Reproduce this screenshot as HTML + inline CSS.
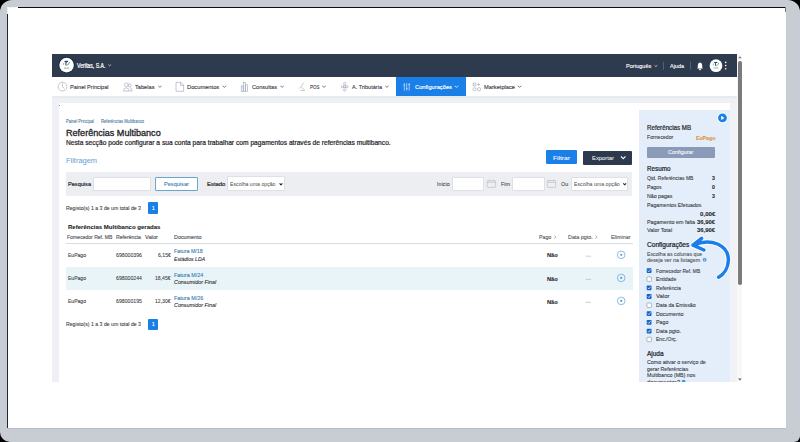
<!DOCTYPE html>
<html><head><meta charset="utf-8"><style>
html,body{margin:0;padding:0;width:800px;height:442px;overflow:hidden;background:#000;}
body{position:relative;font-family:"Liberation Sans",sans-serif;}
.a{position:absolute;box-sizing:border-box;}
.tx{position:absolute;white-space:nowrap;line-height:1;transform-origin:0 50%;}
#app{position:absolute;left:0;top:0;width:800px;height:381.5px;overflow:hidden;}
</style></head><body>
<div class="a" style="left:0;top:0;width:800px;height:442px;border-radius:12px 12px 6px 10px;background:#c8cdd4"></div>
<div class="a" style="left:7px;top:7px;width:779px;height:421px;background:#fff;border-left:1px solid #1c293b;border-top:1px solid #0d0f12"></div>
<div class="a" style="left:7px;top:7px;width:11px;height:1px;background:#f4f5f7"></div>
<div class="a" style="left:7px;top:7px;width:1px;height:7px;background:#eef0f3"></div>
<div class="a" style="left:8px;top:427.5px;width:778px;height:0.8px;background:#b4bcc8"></div>
<div class="a" style="left:785.4px;top:7px;width:0.6px;height:5px;background:#6c7686"></div>

<div id="app">
<!-- header -->
<div class="a" style="left:52px;top:54px;width:685px;height:23px;background:#2e3a4e"></div>
<!-- nav -->
<div class="a" style="left:52px;top:77px;width:685px;height:19px;background:#fff"></div>
<div class="a" style="left:396px;top:77px;width:69.5px;height:18.5px;background:#1a80e8"></div>
<!-- content bg -->
<div class="a" style="left:52px;top:95.7px;width:685px;height:290px;background:#eef0f5"></div>
<div class="a" style="left:58.6px;top:103.3px;width:671.4px;height:290px;background:#fff"></div>
<div class="a" style="left:639.3px;top:110.2px;width:90.7px;height:290px;background:#e4eefa"></div>
<div class="a" style="left:52px;top:95.7px;width:685px;height:2px;background:#e6eaf1"></div>
<div class="a" style="left:58.9px;top:105px;width:1px;height:1px;background:#8a8a8a"></div>
<div class="a" style="left:730px;top:103.3px;width:7px;height:290px;background:#f1f2f6"></div>
<!-- scrollbar -->
<div class="a" style="left:737px;top:54px;width:5px;height:330px;background:#f8f8f9"></div>
<div class="a" style="left:738.3px;top:61.4px;width:3.6px;height:224.1px;background:#7b7b7b;border-radius:1.8px"></div>
<!-- buttons -->
<div class="a" style="left:546px;top:150.2px;width:31px;height:14.1px;background:#1a80e8;border-radius:1px"></div>
<div class="a" style="left:583.2px;top:150.5px;width:48.8px;height:14px;background:#2d3a4e;border-radius:1px"></div>
<!-- filter bar -->
<div class="a" style="left:65.7px;top:171.8px;width:566px;height:24px;background:#eceef2"></div>
<div class="a" style="left:93.3px;top:177.3px;width:58.2px;height:14.2px;background:#fff;border:0.6px solid #dde0e5;border-radius:1px"></div>
<div class="a" style="left:154.9px;top:176.9px;width:42.7px;height:14.4px;background:#fff;border:0.7px solid #6aa6cc;border-radius:1px"></div>
<div class="a" style="left:226.5px;top:176.4px;width:58px;height:14.9px;background:#fff;border:0.6px solid #dde0e5;border-radius:1px"></div>
<div class="a" style="left:451.5px;top:177.3px;width:32.8px;height:14px;background:#fff;border:0.6px solid #dde0e5;border-radius:1px"></div>
<div class="a" style="left:512.3px;top:177.3px;width:32.4px;height:14px;background:#fff;border:0.6px solid #dde0e5;border-radius:1px"></div>
<div class="a" style="left:570.7px;top:176.5px;width:56.9px;height:14.9px;background:#fff;border:0.6px solid #dde0e5;border-radius:1px"></div>
<!-- pagination -->
<div class="a" style="left:147.7px;top:202.2px;width:10.2px;height:11.5px;background:#1a80e8;border-radius:1px"></div>
<div class="a" style="left:147.7px;top:318.6px;width:10.2px;height:11.2px;background:#1a80e8;border-radius:1px"></div>
<!-- table -->
<div class="a" style="left:65.6px;top:267.4px;width:567px;height:22.6px;background:#e9f4f8"></div>
<div class="a" style="left:66px;top:242.8px;width:566.5px;height:1px;background:#d9dce1"></div>
<!-- configurar -->
<div class="a" style="left:646.8px;top:146.9px;width:68.2px;height:11.1px;background:#8a9bb8;border-radius:1px"></div>
<svg class="a" style="left:0;top:0" width="800" height="442" viewBox="0 0 800 442">
<!-- header logo -->
<circle cx="66.6" cy="65.1" r="8.1" fill="#1a2335"/>
<circle cx="66.6" cy="65.1" r="7.3" fill="#ffffff"/>
<path d="M64.6 61.6 L68 61.4" stroke="#1d3f7a" stroke-width="1.1" fill="none"/>
<path d="M66.1 61.8 L65.9 65.4" stroke="#1d3a66" stroke-width="1" fill="none"/>
<path d="M63.9 62.8 L63.3 65" stroke="#7fa6d6" stroke-width="0.8" fill="none"/>
<path d="M66.7 65.3 Q68.9 65 69.6 62" stroke="#5cb85c" stroke-width="1" fill="none"/>
<rect x="64" y="67.6" width="5" height="1.1" fill="#a5adb6"/>
<!-- veritas chevron -->
<path d="M108.3 64.6 L109.7 65.9 L111.1 64.6" stroke="#d5dae2" stroke-width="0.8" fill="none"/>
<!-- portugues chevron -->
<path d="M654.5 65.3 L655.9 66.6 L657.3 65.3" stroke="#d5dae2" stroke-width="0.8" fill="none"/>
<rect x="663.3" y="61.8" width="0.7" height="8" fill="#66707f"/>
<rect x="690.1" y="61.8" width="0.7" height="8" fill="#66707f"/>
<!-- bell -->
<path d="M697 68.6 L697.8 67.6 L697.8 65.2 Q697.9 62.6 700 62.5 Q702.1 62.6 702.2 65.2 L702.2 67.6 L703 68.6 Z" fill="#fff"/>
<circle cx="700" cy="69.4" r="0.9" fill="#fff"/>
<!-- avatar -->
<circle cx="716" cy="65.65" r="6.35" fill="#fff"/>
<path d="M714.2 62.5 L717.4 62.4" stroke="#1d3f7a" stroke-width="1" fill="none"/>
<path d="M715.6 62.7 L715.5 65.8" stroke="#1d3a66" stroke-width="0.9" fill="none"/>
<path d="M713.6 63.6 L713.1 65.6" stroke="#7fa6d6" stroke-width="0.7" fill="none"/>
<path d="M716.2 65.8 Q718.2 65.5 718.8 62.8" stroke="#5cb85c" stroke-width="0.9" fill="none"/>
<rect x="713.6" y="67.5" width="4.8" height="1" fill="#a5adb6"/>
<circle cx="725.7" cy="62.4" r="0.8" fill="#fff"/>
<circle cx="725.7" cy="65.6" r="0.8" fill="#fff"/>
<circle cx="725.7" cy="68.8" r="0.8" fill="#fff"/>
<!-- nav icons -->
<g stroke="#9aa3b5" stroke-width="0.6" fill="none">
<circle cx="62.5" cy="86.6" r="4.4"/>
<path d="M62.5 83.4 L62.5 86.9 L64.6 88.4"/>
<circle cx="126.3" cy="84.8" r="1.9"/>
<circle cx="129.6" cy="85.2" r="1.5"/>
<path d="M123.4 91 Q123.6 87.8 126.3 87.8 Q129 87.8 129.2 91 Z"/>
<path d="M129.8 87.6 Q132 87.9 132 91 L129.6 91"/>
<path d="M176 82.4 L181 82.4 L183.6 85 L183.6 91.3 L176 91.3 Z"/>
<path d="M180.6 82.4 L180.6 85.4 L183.6 85.4" stroke="#7d9fd0"/>
<rect x="241.2" y="86" width="1.8" height="5.3"/>
<rect x="243.4" y="82.3" width="1.8" height="9"/>
<rect x="245.6" y="84.8" width="1.8" height="6.5"/>
<path d="M303.8 82.7 L299.6 88.6 M300.4 90.4 L305 90.4 M301.6 87.2 L304.2 89.8"/>
<circle cx="344.7" cy="83.6" r="1.15"/>
<circle cx="344.7" cy="89.9" r="1.15"/>
<circle cx="342.4" cy="86.75" r="1.15"/>
<circle cx="347" cy="86.75" r="1.15"/>
<rect x="343.7" y="85.8" width="2" height="1.9"/>
<rect x="473.1" y="83.1" width="2.8" height="2.8"/>
<path d="M478.6 82.9 L478.6 86.1 M477 84.5 L480.2 84.5"/>
<circle cx="474.6" cy="89.3" r="1.6"/>
<circle cx="479" cy="89.3" r="1.7"/>
</g>
<!-- chevrons nav -->
<g stroke="#72777f" stroke-width="0.95" fill="none" stroke-linecap="round" stroke-linejoin="round">
<path d="M158.5 86.1 L159.9 87.3 L161.3 86.1"/>
<path d="M222.9 86.1 L224.4 87.3 L225.9 86.1"/>
<path d="M280.7 86.1 L282.1 87.3 L283.5 86.1"/>
<path d="M322.5 86.1 L324 87.3 L325.5 86.1"/>
<path d="M385.5 86.1 L386.9 87.3 L388.3 86.1"/>
<path d="M518.1 86.1 L519.6 87.3 L521.1 86.1"/>
</g>
<path d="M455.1 86.1 L456.6 87.3 L458.1 86.1" stroke="#d4e6fa" stroke-width="0.9" fill="none" stroke-linecap="round"/>
<!-- config sliders -->
<g stroke="#d5e7fb" stroke-width="0.7" fill="none">
<path d="M404.3 83.1 L404.3 90.7 M406.7 83.1 L406.7 90.7 M409.2 83.1 L409.2 90.7"/>
<path d="M403.4 85.2 L405.2 85.2 M405.8 88.6 L407.6 88.6 M408.3 84.6 L410.1 84.6"/>
</g>
</svg>
<svg class="a" style="left:0;top:0" width="800" height="442" viewBox="0 0 800 442">
<!-- exportar chevron -->
<path d="M620.9 156.4 L623.2 158.7 L625.5 156.4" stroke="#fff" stroke-width="1.05" fill="none"/>
<!-- select chevrons -->
<path d="M279.6 183.3 L281 184.8 L282.4 183.3" stroke="#222" stroke-width="1.1" fill="none"/>
<path d="M623.3 183.3 L624.7 184.8 L626.1 183.3" stroke="#222" stroke-width="1.1" fill="none"/>
<!-- calendar icons -->
<g stroke="#b4b9c2" stroke-width="0.6" fill="none">
<rect x="487.2" y="180.6" width="8.4" height="6.8" rx="0.6"/>
<path d="M487.2 182.3 L495.6 182.3 M489.3 179.8 L489.3 181.2 M493.5 179.8 L493.5 181.2"/>
<rect x="547.2" y="180.6" width="8.4" height="6.8" rx="0.6"/>
<path d="M547.2 182.3 L555.6 182.3 M549.3 179.8 L549.3 181.2 M553.5 179.8 L553.5 181.2"/>
</g>
<!-- delete circles + dashes -->
<g stroke="#5b9fd8" stroke-width="0.7" fill="none">
<circle cx="621.2" cy="254.8" r="3.8"/>
<circle cx="621.2" cy="277.9" r="3.8"/>
<circle cx="621.2" cy="300.9" r="3.8"/>
</g>
<g fill="#5b9fd8">
<circle cx="621.2" cy="254.8" r="1.1"/>
<circle cx="621.2" cy="277.9" r="1.1"/>
<circle cx="621.2" cy="300.9" r="1.1"/>
</g>
<g fill="#a9adb3">
<rect x="585.7" y="255.8" width="5.3" height="0.6"/>
<rect x="585.7" y="278.9" width="5.3" height="0.6"/>
<rect x="585.7" y="301.9" width="5.3" height="0.6"/>
</g>
<path d="M554.3 235.6 L555.9 237.2 L554.3 238.8 M595.5 235.6 L597.1 237.2 L595.5 238.8" stroke="#666" stroke-width="0.55" fill="none"/>
<!-- scrollbar arrows -->
<path d="M738.2 58.2 L739.9 56.2 L741.6 58.2 Z" fill="#777"/>
<path d="M738.2 378.6 L739.9 380.6 L741.6 378.6 Z" fill="#555"/>
<!-- play icon -->
<circle cx="722.5" cy="117.9" r="5.3" fill="#fff"/>
<circle cx="722.5" cy="117.9" r="4.4" fill="#1a7fe6"/>
<path d="M721.2 115.8 L724.4 117.9 L721.2 120 Z" fill="#fff"/>
<!-- info icons -->
<circle cx="704.6" cy="259.8" r="2" fill="#5b9ee0"/>
<rect x="704.35" y="259.4" width="0.5" height="1.4" fill="#fff"/>
<rect x="704.35" y="258.6" width="0.5" height="0.45" fill="#fff"/>
<circle cx="683.6" cy="381.6" r="1.9" fill="#4a90d9"/>
<!-- arrow -->
<g fill="none" stroke-linecap="round" stroke-linejoin="round">
<path d="M718.6 277.2 C730 271 733.5 251 717.5 244 C710 241 700 242.3 693 245.1 M701.6 238.3 L693 245.1 L703.9 250" stroke="#fff" stroke-width="5.2"/>
<path d="M718.6 277.2 C730 271 733.5 251 717.5 244 C710 241 700 242.3 693 245.1 M701.6 238.3 L693 245.1 L703.9 250" stroke="#1a7fe8" stroke-width="3.5"/>
</g>
<rect x="646.7" y="268.20" width="4.8" height="4.8" rx="0.7" fill="#1565c8"/>
<path d="M647.8 270.60 L648.8 271.70 L650.6 269.40" stroke="#fff" stroke-width="0.7" fill="none"/>
<rect x="646.95" y="276.90" width="4.5" height="4.5" rx="0.8" fill="#fff" stroke="#80858d" stroke-width="0.55"/>
<rect x="646.7" y="285.50" width="4.8" height="4.8" rx="0.7" fill="#1565c8"/>
<path d="M647.8 287.90 L648.8 289.00 L650.6 286.70" stroke="#fff" stroke-width="0.7" fill="none"/>
<rect x="646.7" y="294.10" width="4.8" height="4.8" rx="0.7" fill="#1565c8"/>
<path d="M647.8 296.50 L648.8 297.60 L650.6 295.30" stroke="#fff" stroke-width="0.7" fill="none"/>
<rect x="646.95" y="303.00" width="4.5" height="4.5" rx="0.8" fill="#fff" stroke="#80858d" stroke-width="0.55"/>
<rect x="646.7" y="311.20" width="4.8" height="4.8" rx="0.7" fill="#1565c8"/>
<path d="M647.8 313.60 L648.8 314.70 L650.6 312.40" stroke="#fff" stroke-width="0.7" fill="none"/>
<rect x="646.7" y="319.90" width="4.8" height="4.8" rx="0.7" fill="#1565c8"/>
<path d="M647.8 322.30 L648.8 323.40 L650.6 321.10" stroke="#fff" stroke-width="0.7" fill="none"/>
<rect x="646.7" y="328.70" width="4.8" height="4.8" rx="0.7" fill="#1565c8"/>
<path d="M647.8 331.10 L648.8 332.20 L650.6 329.90" stroke="#fff" stroke-width="0.7" fill="none"/>
<rect x="646.95" y="337.20" width="4.5" height="4.5" rx="0.8" fill="#fff" stroke="#80858d" stroke-width="0.55"/>
</svg>

<span class="tx" id="t0" style="-webkit-text-stroke:0.22px #ffffff;left:76.50px;top:62.65px;font-size:6.3px;font-weight:400;color:#ffffff;transform:scaleX(0.8224);">Veritas, S.A.</span>
<span class="tx" id="t1" style="-webkit-text-stroke:0.12px #ffffff;left:625.70px;top:62.90px;font-size:6.2px;font-weight:400;color:#ffffff;transform:scaleX(0.8966);">Português</span>
<span class="tx" id="t2" style="-webkit-text-stroke:0.12px #ffffff;left:670.00px;top:62.90px;font-size:6.2px;font-weight:400;color:#ffffff;transform:scaleX(0.8845);">Ajuda</span>
<span class="tx" id="t3" style="-webkit-text-stroke:0.13px #3c4048;left:70.00px;top:84.18px;font-size:6.0px;font-weight:400;color:#3c4048;transform:scaleX(0.9333);">Painel Principal</span>
<span class="tx" id="t4" style="-webkit-text-stroke:0.13px #3c4048;left:135.00px;top:84.18px;font-size:6.0px;font-weight:400;color:#3c4048;transform:scaleX(0.9426);">Tabelas</span>
<span class="tx" id="t5" style="-webkit-text-stroke:0.13px #3c4048;left:187.40px;top:84.18px;font-size:6.0px;font-weight:400;color:#3c4048;transform:scaleX(0.9558);">Documentos</span>
<span class="tx" id="t6" style="-webkit-text-stroke:0.13px #3c4048;left:252.00px;top:84.18px;font-size:6.0px;font-weight:400;color:#3c4048;transform:scaleX(0.9368);">Consultas</span>
<span class="tx" id="t7" style="-webkit-text-stroke:0.13px #3c4048;left:309.60px;top:84.18px;font-size:6.0px;font-weight:400;color:#3c4048;transform:scaleX(0.7418);">POS</span>
<span class="tx" id="t8" style="-webkit-text-stroke:0.13px #3c4048;left:352.00px;top:84.18px;font-size:6.0px;font-weight:400;color:#3c4048;transform:scaleX(0.9271);">A. Tributária</span>
<span class="tx" id="t9" style="-webkit-text-stroke:0.13px #3c4048;left:484.00px;top:84.18px;font-size:6.0px;font-weight:400;color:#3c4048;transform:scaleX(0.9484);">Marketplace</span>
<span class="tx" id="t10" style="-webkit-text-stroke:0.15px #ffffff;left:414.50px;top:84.18px;font-size:6.0px;font-weight:400;color:#ffffff;transform:scaleX(0.9560);">Configurações</span>
<span class="tx" id="t11" style="-webkit-text-stroke:0.05px #336c91;left:65.90px;top:119.93px;font-size:4.7px;font-weight:400;color:#336c91;transform:scaleX(0.8634);">Painel Principal</span>
<span class="tx" id="t12" style="left:97.00px;top:120.05px;font-size:4.4px;font-weight:400;color:#b8c2cc;transform:scaleX(0.5260);">|</span>
<span class="tx" id="t13" style="-webkit-text-stroke:0.05px #336c91;left:100.50px;top:119.93px;font-size:4.7px;font-weight:400;color:#336c91;transform:scaleX(0.8799);">Referências Multibanco</span>
<span class="tx" id="t14" style="-webkit-text-stroke:0.3px #1f2329;left:66.00px;top:129.19px;font-size:8.6px;font-weight:400;color:#1f2329;transform:scaleX(1.0544);">Referências Multibanco</span>
<span class="tx" id="t15" style="-webkit-text-stroke:0.2px #1f2329;left:66.00px;top:139.83px;font-size:6.6px;font-weight:400;color:#1f2329;transform:scaleX(1.0101);">Nesta secção pode configurar a sua conta para trabalhar com pagamentos através de referências multibanco.</span>
<span class="tx" id="t16" style="-webkit-text-stroke:0.05px #6aa3d8;left:66.00px;top:157.41px;font-size:7.6px;font-weight:400;color:#6aa3d8;transform:scaleX(0.9793);">Filtragem</span>
<span class="tx" id="t17" style="-webkit-text-stroke:0.06px #ffffff;left:553.00px;top:155.63px;font-size:5.4px;font-weight:400;color:#ffffff;transform:scaleX(1.2336);">Filtrar</span>
<span class="tx" id="t18" style="-webkit-text-stroke:0.02px #ffffff;left:592.00px;top:155.75px;font-size:5.6px;font-weight:400;color:#ffffff;transform:scaleX(1.0407);">Exportar</span>
<span class="tx" id="t19" style="-webkit-text-stroke:0.2px #2a2d33;left:68.00px;top:181.93px;font-size:5.4px;font-weight:400;color:#2a2d33;transform:scaleX(1.0366);">Pesquisa</span>
<span class="tx" id="t20" style="-webkit-text-stroke:0.1px #3f83b8;left:164.00px;top:182.03px;font-size:5.4px;font-weight:400;color:#3f83b8;transform:scaleX(1.0382);">Pesquisar</span>
<span class="tx" id="t21" style="-webkit-text-stroke:0.2px #2a2d33;left:206.60px;top:181.93px;font-size:5.4px;font-weight:400;color:#2a2d33;transform:scaleX(1.0954);">Estado</span>
<span class="tx" id="t22" style="left:229.70px;top:182.03px;font-size:5.4px;font-weight:400;color:#4a4a4a;transform:scaleX(0.9607);">Escolha uma opção</span>
<span class="tx" id="t23" style="-webkit-text-stroke:0.08px #444;left:437.00px;top:182.03px;font-size:5.4px;font-weight:400;color:#444;transform:scaleX(0.9775);">Início</span>
<span class="tx" id="t24" style="-webkit-text-stroke:0.08px #444;left:501.00px;top:182.03px;font-size:5.4px;font-weight:400;color:#444;transform:scaleX(1.0240);">Fim</span>
<span class="tx" id="t25" style="-webkit-text-stroke:0.08px #444;left:560.80px;top:182.03px;font-size:5.4px;font-weight:400;color:#444;transform:scaleX(0.9996);">Ou</span>
<span class="tx" id="t26" style="left:573.60px;top:182.03px;font-size:5.4px;font-weight:400;color:#4a4a4a;transform:scaleX(0.9650);">Escolha uma opção</span>
<span class="tx" id="t27" style="-webkit-text-stroke:0.08px #3a3a3a;left:66.00px;top:205.95px;font-size:5.6px;font-weight:400;color:#3a3a3a;transform:scaleX(0.9241);">Registo(s) 1 a 3 de um total de 3</span>
<span class="tx" id="t28" style="-webkit-text-stroke:0.15px #ffffff;left:151.60px;top:205.90px;font-size:5.0px;font-weight:400;color:#ffffff;transform:scaleX(0.9348);">1</span>
<span class="tx" id="t29" style="-webkit-text-stroke:0.08px #3a3a3a;left:66.00px;top:321.65px;font-size:5.6px;font-weight:400;color:#3a3a3a;transform:scaleX(0.9241);">Registo(s) 1 a 3 de um total de 3</span>
<span class="tx" id="t30" style="-webkit-text-stroke:0.15px #ffffff;left:151.60px;top:322.10px;font-size:5.0px;font-weight:400;color:#ffffff;transform:scaleX(0.9348);">1</span>
<span class="tx" id="t31" style="-webkit-text-stroke:0.08px #222;left:67.60px;top:223.88px;font-size:6.0px;font-weight:700;color:#222;transform:scaleX(1.0040);">Referências Multibanco geradas</span>
<span class="tx" id="t32" style="-webkit-text-stroke:0.14px #555b62;left:67.30px;top:235.74px;font-size:4.9px;font-weight:400;color:#555b62;transform:scaleX(1.0307);">Fornecedor Ref. MB</span>
<span class="tx" id="t33" style="-webkit-text-stroke:0.14px #555b62;left:115.80px;top:235.74px;font-size:4.9px;font-weight:400;color:#555b62;transform:scaleX(1.0568);">Referência</span>
<span class="tx" id="t34" style="-webkit-text-stroke:0.14px #555b62;left:145.00px;top:235.74px;font-size:4.9px;font-weight:400;color:#555b62;transform:scaleX(1.1751);">Valor</span>
<span class="tx" id="t35" style="-webkit-text-stroke:0.14px #555b62;left:174.20px;top:235.74px;font-size:4.9px;font-weight:400;color:#555b62;transform:scaleX(1.1033);">Documento</span>
<span class="tx" id="t36" style="-webkit-text-stroke:0.1px #555b62;left:539.40px;top:235.64px;font-size:4.9px;font-weight:400;color:#555b62;transform:scaleX(1.0769);">Pago</span>
<span class="tx" id="t37" style="-webkit-text-stroke:0.1px #555b62;left:567.80px;top:235.64px;font-size:4.9px;font-weight:400;color:#555b62;transform:scaleX(1.0984);">Data pgto.</span>
<span class="tx" id="t38" style="-webkit-text-stroke:0.1px #555b62;left:611.20px;top:235.64px;font-size:4.9px;font-weight:400;color:#555b62;transform:scaleX(1.1091);">Eliminar</span>
<span class="tx" id="t39" style="-webkit-text-stroke:0.08px #3b3b3b;left:67.60px;top:253.19px;font-size:5.5px;font-weight:400;color:#3b3b3b;transform:scaleX(0.9194);">EuPago</span>
<span class="tx" id="t40" style="-webkit-text-stroke:0.08px #3b3b3b;left:116.00px;top:253.19px;font-size:5.5px;font-weight:400;color:#3b3b3b;transform:scaleX(0.9444);">698000396</span>
<span class="tx" id="t41" style="-webkit-text-stroke:0.08px #3b3b3b;left:157.70px;top:253.19px;font-size:5.5px;font-weight:400;color:#3b3b3b;transform:scaleX(0.9371);">6,15€</span>
<span class="tx" id="t42" style="-webkit-text-stroke:0.08px #2f74ad;left:174.20px;top:249.49px;font-size:5.5px;font-weight:400;color:#2f74ad;transform:scaleX(0.9711);">Fatura M/18</span>
<span class="tx" id="t43" style="-webkit-text-stroke:0.08px #222;left:173.90px;top:256.59px;font-size:5.5px;font-weight:400;color:#222;font-style:italic;transform:scaleX(0.9331);">Estádios LDA</span>
<span class="tx" id="t44" style="-webkit-text-stroke:0.05px #222;left:547.20px;top:253.40px;font-size:5.0px;font-weight:700;color:#222;transform:scaleX(1.1319);">Não</span>
<span class="tx" id="t45" style="-webkit-text-stroke:0.08px #3b3b3b;left:67.60px;top:276.29px;font-size:5.5px;font-weight:400;color:#3b3b3b;transform:scaleX(0.9194);">EuPago</span>
<span class="tx" id="t46" style="-webkit-text-stroke:0.08px #3b3b3b;left:116.00px;top:276.29px;font-size:5.5px;font-weight:400;color:#3b3b3b;transform:scaleX(0.9444);">698000244</span>
<span class="tx" id="t47" style="-webkit-text-stroke:0.08px #3b3b3b;left:155.00px;top:276.29px;font-size:5.5px;font-weight:400;color:#3b3b3b;transform:scaleX(0.9270);">18,45€</span>
<span class="tx" id="t48" style="-webkit-text-stroke:0.08px #2f74ad;left:174.20px;top:272.59px;font-size:5.5px;font-weight:400;color:#2f74ad;transform:scaleX(0.9846);">Fatura M/24</span>
<span class="tx" id="t49" style="-webkit-text-stroke:0.08px #222;left:173.90px;top:279.69px;font-size:5.5px;font-weight:400;color:#222;font-style:italic;transform:scaleX(0.9766);">Consumidor Final</span>
<span class="tx" id="t50" style="-webkit-text-stroke:0.05px #222;left:547.20px;top:276.50px;font-size:5.0px;font-weight:700;color:#222;transform:scaleX(1.1319);">Não</span>
<span class="tx" id="t51" style="-webkit-text-stroke:0.08px #3b3b3b;left:67.60px;top:299.29px;font-size:5.5px;font-weight:400;color:#3b3b3b;transform:scaleX(0.9194);">EuPago</span>
<span class="tx" id="t52" style="-webkit-text-stroke:0.08px #3b3b3b;left:116.00px;top:299.29px;font-size:5.5px;font-weight:400;color:#3b3b3b;transform:scaleX(0.9444);">698000195</span>
<span class="tx" id="t53" style="-webkit-text-stroke:0.08px #3b3b3b;left:155.00px;top:299.29px;font-size:5.5px;font-weight:400;color:#3b3b3b;transform:scaleX(0.9270);">12,30€</span>
<span class="tx" id="t54" style="-webkit-text-stroke:0.08px #2f74ad;left:174.20px;top:295.59px;font-size:5.5px;font-weight:400;color:#2f74ad;transform:scaleX(0.9846);">Fatura M/26</span>
<span class="tx" id="t55" style="-webkit-text-stroke:0.08px #222;left:173.90px;top:302.69px;font-size:5.5px;font-weight:400;color:#222;font-style:italic;transform:scaleX(0.9766);">Consumidor Final</span>
<span class="tx" id="t56" style="-webkit-text-stroke:0.05px #222;left:547.20px;top:299.50px;font-size:5.0px;font-weight:700;color:#222;transform:scaleX(1.1319);">Não</span>
<span class="tx" id="t57" style="-webkit-text-stroke:0.2px #23262b;left:646.80px;top:125.01px;font-size:6.4px;font-weight:500;color:#23262b;transform:scaleX(0.9721);">Referências MB</span>
<span class="tx" id="t58" style="-webkit-text-stroke:0.1px #3a3d44;left:646.80px;top:134.90px;font-size:5.0px;font-weight:400;color:#3a3d44;transform:scaleX(1.0243);">Fornecedor</span>
<span class="tx" id="t59" style="-webkit-text-stroke:0.08px #e0913f;left:695.70px;top:135.85px;font-size:5.6px;font-weight:700;color:#e0913f;transform:scaleX(0.9266);">EuPago</span>
<span class="tx" id="t60" style="-webkit-text-stroke:0.12px #f3f6fa;left:667.90px;top:150.32px;font-size:5.2px;font-weight:400;color:#f3f6fa;transform:scaleX(1.0481);">Configurar</span>
<span class="tx" id="t61" style="-webkit-text-stroke:0.22px #23262b;left:646.80px;top:165.51px;font-size:6.4px;font-weight:400;color:#23262b;transform:scaleX(0.9833);">Resumo</span>
<span class="tx" id="t62" style="-webkit-text-stroke:0.1px #3a3d44;left:646.60px;top:175.70px;font-size:5.0px;font-weight:400;color:#3a3d44;transform:scaleX(0.9999);">Qtd. Referências MB</span>
<span class="tx" id="t63" style="-webkit-text-stroke:0.05px #222;left:711.80px;top:176.23px;font-size:5.4px;font-weight:700;color:#222;transform:scaleX(0.9667);">3</span>
<span class="tx" id="t64" style="-webkit-text-stroke:0.1px #3a3d44;left:646.60px;top:184.80px;font-size:5.0px;font-weight:400;color:#3a3d44;transform:scaleX(1.0220);">Pagos</span>
<span class="tx" id="t65" style="-webkit-text-stroke:0.05px #222;left:711.80px;top:185.03px;font-size:5.4px;font-weight:700;color:#222;transform:scaleX(0.9667);">0</span>
<span class="tx" id="t66" style="-webkit-text-stroke:0.1px #3a3d44;left:646.60px;top:193.80px;font-size:5.0px;font-weight:400;color:#3a3d44;transform:scaleX(1.0501);">Não pagas</span>
<span class="tx" id="t67" style="-webkit-text-stroke:0.05px #222;left:711.80px;top:193.93px;font-size:5.4px;font-weight:700;color:#222;transform:scaleX(0.9667);">3</span>
<span class="tx" id="t68" style="-webkit-text-stroke:0.1px #3a3d44;left:646.60px;top:203.20px;font-size:5.0px;font-weight:400;color:#3a3d44;transform:scaleX(1.0465);">Pagamentos Efetuados</span>
<span class="tx" id="t69" style="-webkit-text-stroke:0.05px #222;left:699.50px;top:211.73px;font-size:5.4px;font-weight:700;color:#222;transform:scaleX(1.1481);">0,00€</span>
<span class="tx" id="t70" style="-webkit-text-stroke:0.1px #3a3d44;left:646.60px;top:219.60px;font-size:5.0px;font-weight:400;color:#3a3d44;transform:scaleX(1.0749);">Pagamento em falta</span>
<span class="tx" id="t71" style="-webkit-text-stroke:0.05px #222;left:696.90px;top:219.73px;font-size:5.4px;font-weight:700;color:#222;transform:scaleX(1.0970);">36,90€</span>
<span class="tx" id="t72" style="-webkit-text-stroke:0.1px #3a3d44;left:646.60px;top:228.30px;font-size:5.0px;font-weight:400;color:#3a3d44;transform:scaleX(1.0832);">Valor Total</span>
<span class="tx" id="t73" style="-webkit-text-stroke:0.05px #222;left:696.90px;top:228.23px;font-size:5.4px;font-weight:700;color:#222;transform:scaleX(1.0970);">36,90€</span>
<span class="tx" id="t74" style="-webkit-text-stroke:0.22px #23262b;left:646.80px;top:241.81px;font-size:6.4px;font-weight:400;color:#23262b;transform:scaleX(1.0262);">Configurações</span>
<span class="tx" id="t75" style="-webkit-text-stroke:0.1px #555;left:646.80px;top:251.50px;font-size:5.0px;font-weight:400;color:#555;transform:scaleX(1.0452);">Escolha as colunas que</span>
<span class="tx" id="t76" style="-webkit-text-stroke:0.1px #555;left:646.80px;top:257.60px;font-size:5.0px;font-weight:400;color:#555;transform:scaleX(1.0633);">deseja ver na listagem</span>
<span class="tx" id="t77" style="-webkit-text-stroke:0.1px #3a3d44;left:655.50px;top:268.50px;font-size:5.0px;font-weight:400;color:#3a3d44;transform:scaleX(0.9815);">Fornecedor Ref. MB</span>
<span class="tx" id="t78" style="-webkit-text-stroke:0.1px #3a3d44;left:655.50px;top:277.00px;font-size:5.0px;font-weight:400;color:#3a3d44;transform:scaleX(1.0278);">Entidade</span>
<span class="tx" id="t79" style="-webkit-text-stroke:0.1px #3a3d44;left:655.50px;top:285.80px;font-size:5.0px;font-weight:400;color:#3a3d44;transform:scaleX(1.0253);">Referência</span>
<span class="tx" id="t80" style="-webkit-text-stroke:0.1px #3a3d44;left:655.50px;top:294.40px;font-size:5.0px;font-weight:400;color:#3a3d44;transform:scaleX(1.1934);">Valor</span>
<span class="tx" id="t81" style="-webkit-text-stroke:0.1px #3a3d44;left:655.50px;top:303.10px;font-size:5.0px;font-weight:400;color:#3a3d44;transform:scaleX(1.0400);">Data da Emissão</span>
<span class="tx" id="t82" style="-webkit-text-stroke:0.1px #3a3d44;left:655.50px;top:311.50px;font-size:5.0px;font-weight:400;color:#3a3d44;transform:scaleX(1.0712);">Documento</span>
<span class="tx" id="t83" style="-webkit-text-stroke:0.1px #3a3d44;left:655.50px;top:320.20px;font-size:5.0px;font-weight:400;color:#3a3d44;transform:scaleX(1.0610);">Pago</span>
<span class="tx" id="t84" style="-webkit-text-stroke:0.1px #3a3d44;left:655.50px;top:329.00px;font-size:5.0px;font-weight:400;color:#3a3d44;transform:scaleX(1.0789);">Data pgto.</span>
<span class="tx" id="t85" style="-webkit-text-stroke:0.1px #3a3d44;left:655.50px;top:337.30px;font-size:5.0px;font-weight:400;color:#3a3d44;transform:scaleX(1.0075);">Enc./Orç.</span>
<span class="tx" id="t86" style="-webkit-text-stroke:0.22px #23262b;left:646.80px;top:351.11px;font-size:6.4px;font-weight:400;color:#23262b;transform:scaleX(1.0147);">Ajuda</span>
<span class="tx" id="t87" style="-webkit-text-stroke:0.1px #3a3d44;left:646.80px;top:360.10px;font-size:5.0px;font-weight:400;color:#3a3d44;transform:scaleX(1.0631);">Como ativar o serviço de</span>
<span class="tx" id="t88" style="-webkit-text-stroke:0.1px #3a3d44;left:646.80px;top:366.50px;font-size:5.0px;font-weight:400;color:#3a3d44;transform:scaleX(1.0390);">gerar Referências</span>
<span class="tx" id="t89" style="-webkit-text-stroke:0.1px #3a3d44;left:646.80px;top:373.10px;font-size:5.0px;font-weight:400;color:#3a3d44;transform:scaleX(1.0532);">Multibanco (MB) nos</span>
<span class="tx" id="t90" style="-webkit-text-stroke:0.1px #3a3d44;left:646.80px;top:379.70px;font-size:5.0px;font-weight:400;color:#3a3d44;transform:scaleX(1.1055);">documentos?</span>
</div>
</body></html>
